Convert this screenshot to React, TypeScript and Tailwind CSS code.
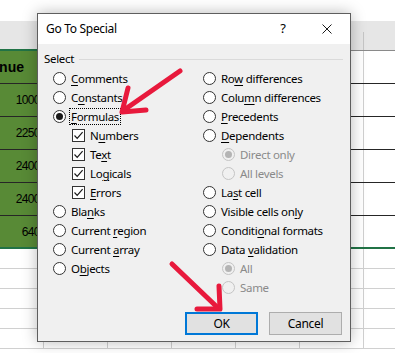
import React from 'react';

type Item = {
  label: string;
  key?: number; // index of the access-key letter
  kind?: 'radio' | 'check';
  checked?: boolean;
  disabled?: boolean;
  indent?: boolean;
  focus?: boolean;
};

const LEFT: Item[] = [
  { label: 'Comments', key: 0 },
  { label: 'Constants', key: 1 },
  { label: 'Formulas', key: 0, checked: true, focus: true },
  { label: 'Numbers', key: 1, kind: 'check', checked: true, indent: true },
  { label: 'Text', key: 2, kind: 'check', checked: true, indent: true },
  { label: 'Logicals', key: 2, kind: 'check', checked: true, indent: true },
  { label: 'Errors', key: 0, kind: 'check', checked: true, indent: true },
  { label: 'Blanks', key: 3 },
  { label: 'Current region', key: 8 },
  { label: 'Current array', key: 8 },
  { label: 'Objects', key: 1 },
];

const RIGHT: Item[] = [
  { label: 'Row differences', key: 2 },
  { label: 'Column differences', key: 4 },
  { label: 'Precedents', key: 0 },
  { label: 'Dependents', key: 0 },
  { label: 'Direct only', checked: true, disabled: true, indent: true },
  { label: 'All levels', disabled: true, indent: true },
  { label: 'Last cell', key: 2 },
  { label: 'Visible cells only', key: 16 },
  { label: 'Conditional formats', key: 7 },
  { label: 'Data validation', key: 5 },
  { label: 'All', checked: true, disabled: true, indent: true },
  { label: 'Same', disabled: true, indent: true },
];

const GREEN_ROWS = ['10000', '22500', '24000', '24000', '6400'];

function Label({ item }: { item: Item }) {
  const { label, key } = item;
  const text =
    key === undefined ? (
      label
    ) : (
      <>
        {label.slice(0, key)}
        <span className="underline underline-offset-[2px] decoration-[1px]">{label[key]}</span>
        {label.slice(key + 1)}
      </>
    );
  return (
    <span
      className={`whitespace-nowrap leading-[15px] px-[1px] ${item.disabled ? 'text-[#8a8a8a]' : 'text-black'} ${
        item.focus ? 'outline-1 outline-dotted outline-black' : ''
      }`}
    >
      {text}
    </span>
  );
}

function Radio({ checked, disabled }: { checked?: boolean; disabled?: boolean }) {
  return (
    <span
      className={`w-[13px] h-[13px] rounded-full border flex items-center justify-center shrink-0 ${
        disabled ? 'border-[#c4c4c4] bg-[#f0f0f0]' : 'border-[#333333] bg-white'
      }`}
    >
      {checked && (
        <span className={`w-[7px] h-[7px] rounded-full ${disabled ? 'bg-[#b4b4b4]' : 'bg-[#1a1a1a]'}`} />
      )}
    </span>
  );
}

function Check({ checked }: { checked?: boolean }) {
  return (
    <span className="w-[13px] h-[13px] border border-[#333333] bg-white flex items-center justify-center shrink-0">
      {checked && (
        <svg width="11" height="11" viewBox="0 0 11 11">
          <path d="M1.5 5.5 L4.2 8.3 L9.6 2.2" fill="none" stroke="#1a1a1a" strokeWidth="1.2" />
        </svg>
      )}
    </span>
  );
}

function Option({ item, subIndent }: { item: Item; subIndent: string }) {
  return (
    <div className={`h-[19px] flex items-center gap-[4px] ${item.indent ? subIndent : ''}`}>
      {item.kind === 'check' ? (
        <Check checked={item.checked} />
      ) : (
        <Radio checked={item.checked} disabled={item.disabled} />
      )}
      <Label item={item} />
    </div>
  );
}

function Spreadsheet() {
  return (
    <div className="flex flex-col" style={{ fontFamily: '"Liberation Sans", Arial, sans-serif' }}>
      {/* ribbon remnant */}
      <div className="h-[21px] bg-white" />
      {/* column header band */}
      <div className="h-[30px] flex bg-[#e6e6e6]">
        <div className="w-[60px] border-b-2 border-[#217346]" />
        <div className="flex-1 flex border-b border-[#8a8a8a]">
          <div className="w-[304px] border-r border-[#c6c6c6] mt-[11px]" />
          <div className="flex-1" />
        </div>
      </div>
      {/* header row */}
      <div className="h-[33px] flex border-b border-[#262626]">
        <div className="w-[60px] bg-[#588a36] flex items-center justify-end pr-[36px] overflow-hidden">
          <span className="whitespace-nowrap font-bold text-[14px] text-black">Revenue</span>
        </div>
        <div className="w-[304px] border-r border-[#d0d0d0]" />
      </div>
      {GREEN_ROWS.map((v, i) => (
        <div
          key={v + i}
          className={`h-[33px] flex ${i === GREEN_ROWS.length - 1 ? 'border-b-2 border-[#217346]' : 'border-b border-[#262626]'}`}
        >
          <div className="w-[60px] bg-[#588a36] flex items-center justify-end pr-[14px]">
            <span className="text-[12px] tracking-[-0.6px] text-black">{v}</span>
          </div>
          <div className="w-[304px] border-r border-[#d0d0d0]" />
        </div>
      ))}
      {[0, 1, 2, 3, 4].map((r) => (
        <div key={r} className="h-[20px] flex border-b border-[#d0d0d0]">
          <div className="w-[44px] border-r border-[#d0d0d0]" />
          {[0, 1, 2, 3, 4].map((c) => (
            <div key={c} className="w-[64px] border-r border-[#d0d0d0] shrink-0" />
          ))}
        </div>
      ))}
    </div>
  );
}

function Dialog() {
  return (
    <div
      className="absolute left-[37px] top-[13px] w-[314px] h-[329px] border border-[#5e5e5e] bg-[#f0f0f0] shadow-[0_0_14px_rgba(0,0,0,0.28)] flex flex-col text-[11.5px] tracking-[-0.3px]"
      style={{ fontFamily: '"Noto Sans", "Open Sans", sans-serif' }}
    >
      <div className="h-[30px] bg-white flex items-center pl-[8px] pr-[18px]">
        <span className="flex-1 text-black text-[12px]">Go To Special</span>
        <span className="w-[12px] text-center mr-[33px] text-[13px]">?</span>
        <svg width="10" height="10" viewBox="0 0 10 10">
          <path d="M0.5 0.5 L9.5 9.5 M9.5 0.5 L0.5 9.5" stroke="#1a1a1a" strokeWidth="1" />
        </svg>
      </div>
      <div className="flex-1 flex flex-col pl-[6px] pr-[7px] pt-[5px] pb-[6px]">
        <div className="h-[20px] flex items-center gap-[5px]">
          <span className="text-black">Select</span>
          <div className="flex-1 h-px bg-[#dadada]" />
        </div>
        <div className="flex pl-[9px]">
          <div className="w-[150px] flex flex-col">
            {LEFT.map((it) => (
              <Option key={it.label} item={it} subIndent="pl-[19px]" />
            ))}
          </div>
          <div className="flex-1 flex flex-col">
            {RIGHT.map((it, i) => (
              <Option key={it.label + i} item={it} subIndent="pl-[19px]" />
            ))}
          </div>
        </div>
        <div className="flex justify-end gap-[11px] mt-auto pr-[1px]">
          <button className="w-[73px] h-[23px] border-2 border-[#0078d7] bg-[#e1e1e1] text-black text-[12px]">OK</button>
          <button className="w-[73px] h-[23px] border border-[#adadad] bg-[#e1e1e1] text-black text-[12px]">Cancel</button>
        </div>
      </div>
    </div>
  );
}

function Arrows() {
  return (
    <svg className="absolute inset-0 pointer-events-none" width="395" height="353" viewBox="0 0 395 353">
      <g fill="none" stroke="#e8193c" strokeWidth="5" strokeLinecap="round" strokeLinejoin="round">
        <path d="M180 71 L124 110" />
        <path d="M128 88 L122 112 L146 110" />
        <path d="M172 264 L217 307" />
        <path d="M219 286 L220 309 L197 309" />
      </g>
    </svg>
  );
}

export default function App() {
  return (
    <div className="relative w-[395px] h-[353px] overflow-hidden bg-white">
      <Spreadsheet />
      <Dialog />
      <Arrows />
    </div>
  );
}
